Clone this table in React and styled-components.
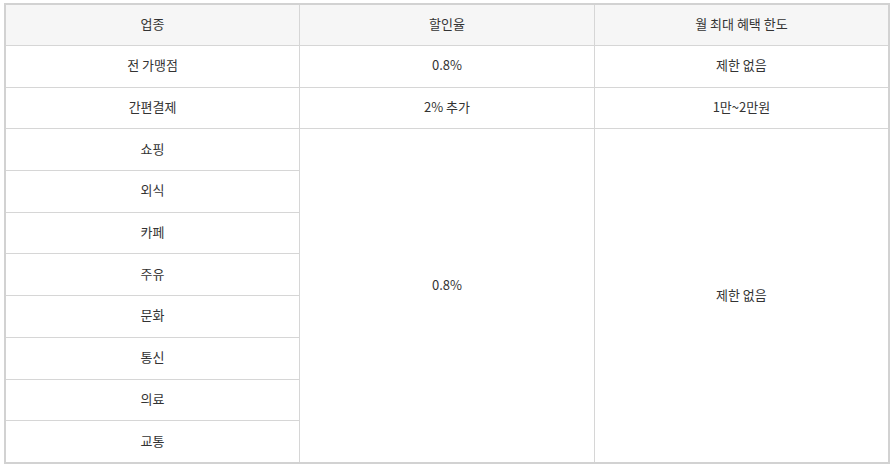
import React from 'react';
import styled, { createGlobalStyle } from 'styled-components';

const Global = createGlobalStyle`
  body {
    margin: 0;
    padding: 3px 4px;
    background: #fff;
    font-family: "Noto Sans CJK KR", "Noto Sans", sans-serif;
  }
`;

const Table = styled.table`
  width: 886px;
  border-collapse: collapse;
  table-layout: fixed;
  border: 2px solid #d2d2d2;
  font-size: 13px;
  color: #333;
`;

const Head = styled.th`
  height: 37px;
  padding: 0 0 3px;
  background: #f6f6f6;
  border: 1px solid #d6d6d6;
  font-weight: normal;
  text-align: center;
  vertical-align: middle;
`;

const Cell = styled.td`
  height: 37.7px;
  padding: 0 0 ${props => 3 + (props.$lift || 0)}px;
  border: 1px solid #d6d6d6;
  text-align: center;
  vertical-align: middle;
`;

const categories = ['쇼핑', '외식', '카페', '주유', '문화', '통신', '의료', '교통'];

const App = function () {
  return (
    <>
      <Global />
      <Table>
        <thead>
          <tr>
            <Head>업종</Head>
            <Head>할인율</Head>
            <Head>월 최대 혜택 한도</Head>
          </tr>
        </thead>
        <tbody>
          <tr>
            <Cell>전 가맹점</Cell>
            <Cell>0.8%</Cell>
            <Cell>제한 없음</Cell>
          </tr>
          <tr>
            <Cell>간편결제</Cell>
            <Cell>2% 추가</Cell>
            <Cell>1만~2만원</Cell>
          </tr>
          {categories.map((name, i) => (
            <tr key={name}>
              <Cell>{name}</Cell>
              {i === 0 && <Cell rowSpan={8} $lift={19}>0.8%</Cell>}
              {i === 0 && <Cell rowSpan={8}>제한 없음</Cell>}
            </tr>
          ))}
        </tbody>
      </Table>
    </>
  );
};

export default App;
